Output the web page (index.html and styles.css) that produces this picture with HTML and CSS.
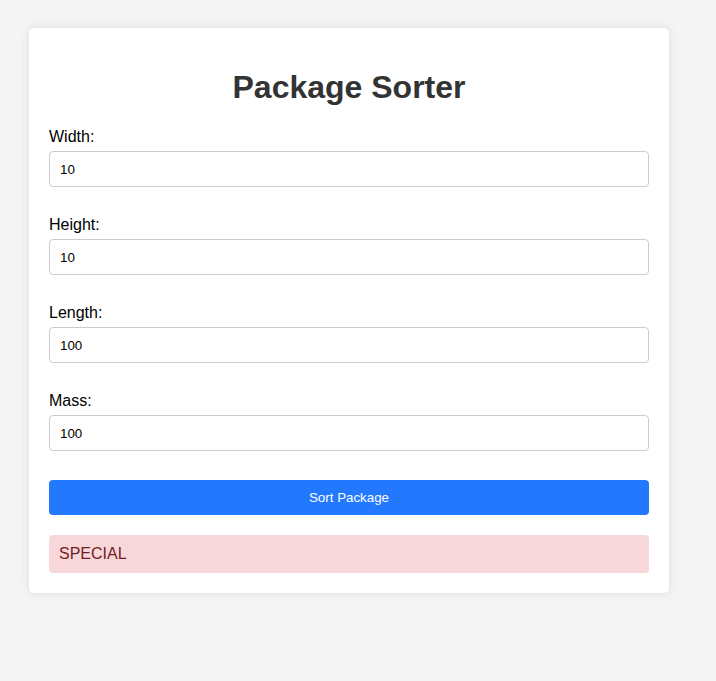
FILE: index.html
```html
<!DOCTYPE html>
<html>
<head>
<meta charset="utf-8">
<link rel="stylesheet" href="styles.css">
</head>
<body>
<div class="card">
  <h1 class="title">Package Sorter</h1>
  <div class="group">
    <label class="label">Width:</label>
    <input class="field" type="number" value="10">
  </div>
  <div class="group">
    <label class="label">Height:</label>
    <input class="field" type="number" value="10">
  </div>
  <div class="group">
    <label class="label">Length:</label>
    <input class="field" type="number" value="100">
  </div>
  <div class="group">
    <label class="label">Mass:</label>
    <input class="field" type="number" value="100">
  </div>
  <button class="btn">Sort Package</button>
  <div class="result">SPECIAL</div>
</div>
</body>
</html>
```
FILE: styles.css
```css
body {
  margin: 8px;
  padding: 20px 20px 20px 21px;
  background: #f4f4f4;
  font-family: "Liberation Sans", Arial, sans-serif;
}
.card {
  max-width: 600px;
  padding: 20px;
  background: #fff;
  border-radius: 5px;
  box-shadow: 0 0 10px rgba(0,0,0,0.1);
}
.title {
  text-align: center;
  color: #333;
  font-size: 32px;
  margin: 21px 0 22px;
}
.group {
  margin-bottom: 29px;
}
.label {
  display: block;
  font-size: 16px;
  color: #000;
  margin-bottom: 5px;
}
.field {
  display: block;
  box-sizing: border-box;
  width: 100%;
  height: 36px;
  padding: 10px;
  border: 1px solid #ccc;
  border-radius: 4px;
  font-family: "Liberation Sans", Arial, sans-serif;
  font-size: 13.33px;
  color: #000;
  -moz-appearance: textfield;
}
.field::-webkit-outer-spin-button,
.field::-webkit-inner-spin-button {
  -webkit-appearance: none;
  margin: 0;
}
.btn {
  display: block;
  width: 100%;
  height: 35px;
  padding: 0;
  border: none;
  border-radius: 4px;
  background: #2279ff;
  color: #fff;
  font-family: "Liberation Sans", Arial, sans-serif;
  font-size: 13.33px;
}
.result {
  margin-top: 20px;
  padding: 10px;
  background: #f8d7da;
  color: #721c24;
  border-radius: 4px;
  font-size: 16px;
}
```
